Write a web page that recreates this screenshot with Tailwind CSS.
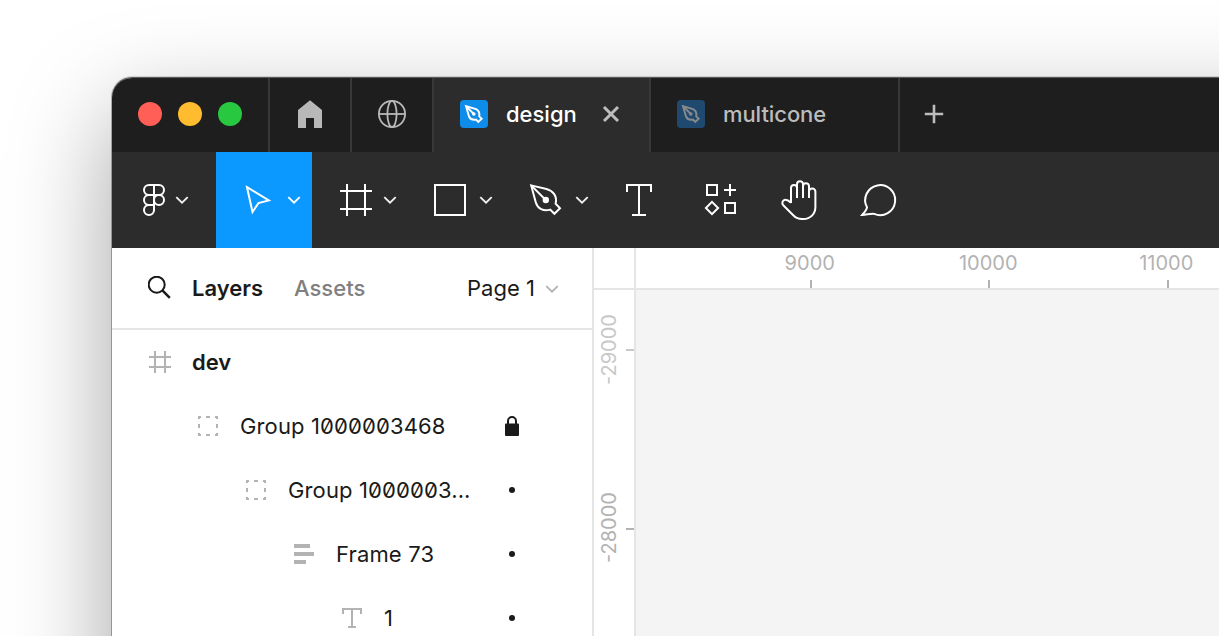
<!DOCTYPE html>
<html lang="en">
<head>
<meta charset="utf-8">
<title>design</title>
<script src="https://cdn.jsdelivr.net/npm/@tailwindcss/browser@4"></script>
</head>
<body class="bg-white font-['Inter',sans-serif] text-[#1a1a1a] antialiased">
<main class="flex h-[636px] w-[1219px] overflow-hidden pl-[112px] pt-[78px]">
  <div class="flex h-[1100px] w-[1700px] shrink-0 flex-col rounded-[20px] shadow-[0_0_0_1px_rgba(0,0,0,0.16),0_-1px_0_0_rgba(0,0,0,0.45),0_-1px_0_1px_rgba(0,0,0,0.14),0_36px_100px_rgba(0,0,0,0.37)]">
    <!-- tab bar -->
    <header class="flex h-[74px] shrink-0 rounded-t-[20px] bg-[#1e1e1e] text-[22px] font-medium">
      <div class="flex w-[156px] items-center gap-4 pb-0.5 pl-[26px]">
        <span class="size-6 rounded-full bg-[#ff5f57]"></span>
        <span class="size-6 rounded-full bg-[#febc2e]"></span>
        <span class="size-6 rounded-full bg-[#28c840]"></span>
      </div>
      <div class="w-[82px] border-l-2 border-[#383838]">
        <svg class="size-full" viewBox="270 78 80 74"><path d="M310 100.3 322 110V128H314V118H306V128H298V110Z" fill="#b8b8b8"/></svg>
      </div>
      <div class="w-[82px] border-l-2 border-[#383838]">
        <svg class="size-full" viewBox="352 78 80 74" fill="none" stroke="#b8b8b8" stroke-width="1.8"><circle cx="392" cy="114" r="13.1"/><ellipse cx="392" cy="114" rx="4.6" ry="13.1"/><path d="M379 114H405"/></svg>
      </div>
      <div class="flex w-[217px] items-center border-l-2 border-[#383838] bg-[#2c2c2c] pb-0.5 pl-[26px] text-white">
        <svg class="size-7" viewBox="0 0 28 28"><rect width="28" height="28" rx="4" fill="#0d8ce9"/><g fill="none" stroke="#fff" stroke-width="1.9"><path d="M6 6.2 16 9.2C19 10.8 20 12.5 19.2 16.3L21.7 18.8 18.3 22 16 19.6C12.4 20.3 10.3 19.3 9 16.5Z"/><path d="M6 6.2 13.8 14"/></g><circle cx="13.8" cy="14" r="1.8" fill="#fff"/></svg>
        <span class="ml-[18px] w-[72px]">design</span>
        <svg class="ml-6 size-[18px]" viewBox="0 0 18 18"><path d="M2 2 16 16M16 2 2 16" stroke="#bdbdbd" stroke-width="3"/></svg>
      </div>
      <div class="flex w-[249px] items-center border-l-2 border-[#383838] pb-0.5 pl-[26px] text-[#bcbcbc]">
        <svg class="size-7" viewBox="0 0 28 28"><rect width="28" height="28" rx="4" fill="#20496f"/><g fill="none" stroke="#8a8a8a" stroke-width="1.9"><path d="M6 6.2 16 9.2C19 10.8 20 12.5 19.2 16.3L21.7 18.8 18.3 22 16 19.6C12.4 20.3 10.3 19.3 9 16.5Z"/><path d="M6 6.2 13.8 14"/></g><circle cx="13.8" cy="14" r="1.8" fill="#8a8a8a"/></svg>
        <span class="ml-[18px] tracking-[-0.08px]">multicone</span>
      </div>
      <div class="flex items-center border-l-2 border-[#383838] pb-0.5 pl-6">
        <svg class="size-5" viewBox="0 0 20 20"><path d="M.8 10H19.2M10 .8V19.2" stroke="#bdbdbd" stroke-width="2.6"/></svg>
      </div>
    </header>

    <!-- toolbar -->
    <nav class="flex h-24 shrink-0 bg-[#2c2c2c]">
      <svg class="w-[104px]" viewBox="112 152 104 96" fill="none" stroke="#fff" stroke-width="2"><rect x="144" y="185" width="20" height="10" rx="5"/><path d="M154 195H149a5 5 0 0 0 0 10H154M149 205a5 5 0 1 0 5 5V185"/><circle cx="159" cy="200" r="5"/><path d="M176.3 197.1 182 202.6 187.7 197.1" stroke="#f0f0f0" stroke-width="1.9"/></svg>
      <svg class="w-24 bg-[#0c99ff]" viewBox="216 152 96 96" fill="none" stroke="#fff" stroke-width="2"><path d="M247 187.2 268.8 200.4 258.4 203.1 252.5 212Z"/><path d="M288.3 197.1 294 202.6 299.7 197.1" stroke-width="1.9"/></svg>
      <svg class="w-24" viewBox="312 152 96 96" fill="none" stroke="#fff" stroke-width="2"><path d="M347 184V216M365 184V216M340 191H372M340 209H372"/><path d="M384.3 197.1 390 202.6 395.7 197.1" stroke="#f0f0f0" stroke-width="1.9"/></svg>
      <svg class="w-24" viewBox="408 152 96 96" fill="none" stroke="#fff" stroke-width="2"><rect x="435" y="185" width="30" height="30"/><path d="M480.3 197.1 486 202.6 491.7 197.1" stroke="#f0f0f0" stroke-width="1.9"/></svg>
      <svg class="w-24" viewBox="504 152 96 96" fill="none" stroke="#fff" stroke-width="2"><path d="M531.2 185.4 546.5 189C553 190.8 557.5 196 555.6 203.8L560 208.3 554.4 213.8 550.2 209.6C543.5 211.6 537.5 208.5 535.8 202.5Z"/><path d="M531.2 185.4 545.7 200"/><circle cx="545.8" cy="200" r="3.2" fill="#fff" stroke="none"/><path d="M576.3 197.1 582 202.6 587.7 197.1" stroke="#f0f0f0" stroke-width="1.9"/></svg>
      <svg class="w-20" viewBox="600 152 80 96" fill="none" stroke="#fff" stroke-width="2"><path d="M627 192V185H651V192M639 185V215M632 215H646"/></svg>
      <svg class="w-20" viewBox="680 152 80 96" fill="none" stroke="#fff" stroke-width="2"><path d="M707 185H717V195H707ZM725 203H735V213H725ZM730 184V196M724 190H736M712 201.9 718.1 208 712 214.1 705.9 208Z"/></svg>
      <svg class="w-20" viewBox="760 152 80 96" fill="none" stroke="#fff" stroke-width="2"><path d="M791 203V188a3 3 0 0 1 6 0V198M797 188V184.2a3 3 0 0 1 6 0V198M803 186.2a3 3 0 0 1 6 0V198M809 191.6a3.2 3.2 0 0 1 6.4 0V207c0 7-5 12-12 12H802c-4 0-6-1-8.5-3.5L783.5 205.5c-1.8-1.8-1.3-4 0-5 2-1.5 4.2-.8 7.5 2.3"/></svg>
      <svg class="w-20" viewBox="840 152 80 96" fill="none" stroke="#fff" stroke-width="2"><path d="M867 207.3A15 15 0 1 1 874.2 213.9C870.2 213.6 866.5 214.8 862.2 214.9 864.8 212 866.6 210.2 867 207.3Z"/></svg>
    </nav>

    <div class="flex grow bg-white">
      <!-- layers panel -->
      <aside class="w-[482px] shrink-0 border-r-2 border-[#e5e5e5] text-[22px]">
        <div class="flex h-[82px] items-center border-b-2 border-[#e5e5e5] pl-9">
          <svg class="size-6" viewBox="148 276 24 24" fill="none" stroke="#1a1a1a" stroke-width="2"><circle cx="156.7" cy="284.7" r="8"/><path d="M162.4 290.4 169.8 297.8" stroke-width="2.5"/></svg>
          <span class="ml-5 w-[102px] font-semibold">Layers</span>
          <span class="w-[173px] font-medium text-[#808080]">Assets</span>
          <span class="w-[77px] whitespace-nowrap">Page 1</span>
          <svg class="h-8 w-4" viewBox="544 272 16 32" fill="none" stroke="#b3b3b3" stroke-width="1.9"><path d="M546.3 286.1 552 291.6 557.7 286.1"/></svg>
        </div>
        <div class="flex h-16 items-center pl-9">
          <svg class="size-6" viewBox="148 350 24 24" stroke="#b3b3b3" stroke-width="2"><path d="M155 351V373M165 351V373M149 357H171M149 367H171"/></svg>
          <span class="ml-5 font-semibold">dev</span>
        </div>
        <div class="flex h-16 items-center pl-21 tracking-[0.12px]">
          <svg class="size-6" viewBox="0 0 24 24" fill="none" stroke="#b3b3b3" stroke-width="2"><path d="M2 3H5M3 2V5M10 3H14M19 3H22M21 2V5M21 10V14M21 19V22M22 21H19M14 21H10M5 21H2M3 22V19M3 14V10"/></svg>
          <span class="ml-5 w-[260px] slashed-zero">Group 1000003468</span>
          <svg class="size-6" viewBox="500 414 24 24"><rect x="505" y="423.5" width="14" height="12.5" rx="1" fill="#1a1a1a"/><path d="M508 425V421a4 4 0 0 1 8 0V425" fill="none" stroke="#1a1a1a" stroke-width="2"/></svg>
        </div>
        <div class="flex h-16 items-center pl-33 tracking-[0.12px]">
          <svg class="size-6" viewBox="0 0 24 24" fill="none" stroke="#b3b3b3" stroke-width="2"><path d="M2 3H5M3 2V5M10 3H14M19 3H22M21 2V5M21 10V14M21 19V22M22 21H19M14 21H10M5 21H2M3 22V19M3 14V10"/></svg>
          <span class="ml-5 w-[221px] slashed-zero">Group 1000003...</span>
          <span class="size-1.5 rounded-full bg-[#1a1a1a]"></span>
        </div>
        <div class="flex h-16 items-center pl-45 tracking-[0.15px]">
          <svg class="size-6" viewBox="0 0 24 24" fill="#b3b3b3"><path d="M2 2H18V6H2ZM2 10H22V14H2ZM2 18H14V22H2Z"/></svg>
          <span class="ml-5 w-[173px]">Frame 73</span>
          <span class="size-1.5 rounded-full bg-[#1a1a1a]"></span>
        </div>
        <div class="flex h-16 items-center pl-57">
          <svg class="size-6" viewBox="0 0 24 24" fill="none" stroke="#b3b3b3" stroke-width="2"><path d="M3 8V3H21V8M12 3V21M8 21H16"/></svg>
          <span class="ml-5 w-[125px]">1</span>
          <span class="size-1.5 rounded-full bg-[#1a1a1a]"></span>
        </div>
      </aside>
      <!-- vertical ruler -->
      <div class="w-[42px] shrink-0 border-r-2 border-[#e5e5e5] text-xl leading-[30px]">
        <div class="h-[42px] border-b-2 border-[#e5e5e5]"></div>
        <div class="mt-[-30px] flex h-[178.5px] items-center text-[#c8c8c8]">
          <span class="mt-0.5 h-[88px] w-[30px] rotate-180 text-center [writing-mode:vertical-rl]">-29000</span>
          <span class="ml-0.5 mt-0.5 h-0.5 w-2 bg-[#c8c8c8]"></span>
        </div>
        <div class="flex h-[178.5px] items-center text-[#b3b3b3]">
          <span class="mt-px h-[88px] w-[30px] rotate-180 text-center [writing-mode:vertical-rl]">-28000</span>
          <span class="ml-0.5 mt-0.5 h-0.5 w-2 bg-[#b3b3b3]"></span>
        </div>
      </div>
      <!-- horizontal ruler and canvas -->
      <div class="flex grow flex-col bg-[#f4f4f4]">
        <div class="flex h-[42px] border-b-2 border-[#e5e5e5] bg-white pl-[85.5px] text-xl leading-[30px] text-[#b3b3b3]">
          <div class="flex w-[178.5px] flex-col items-center"><span class="h-8 pr-0.5">9000</span><span class="h-2 w-0.5 bg-[#b3b3b3]"></span></div>
          <div class="flex w-[178.5px] flex-col items-center"><span class="h-8 pr-0.5">10000</span><span class="h-2 w-0.5 bg-[#b3b3b3]"></span></div>
          <div class="flex w-[178.5px] flex-col items-center"><span class="h-8 pr-[3px]">11000</span><span class="h-2 w-0.5 bg-[#b3b3b3]"></span></div>
        </div>
      </div>
    </div>
  </div>
</main>
</body>
</html>
